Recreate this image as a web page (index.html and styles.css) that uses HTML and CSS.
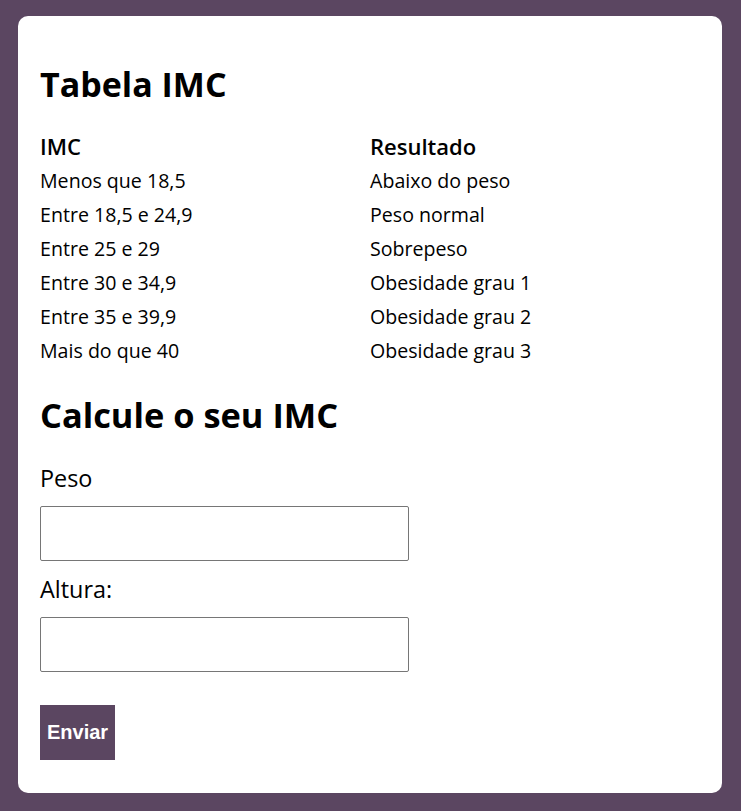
FILE: index.html
```html
<!DOCTYPE html>
<html lang="pt-BR">
<head>
<meta charset="utf-8">
<title>Tabela IMC</title>
<link rel="stylesheet" href="styles.css">
</head>
<body>
<main class="card">
  <h1 class="title">Tabela IMC</h1>
  <div class="table">
    <div class="th">IMC</div><div class="th">Resultado</div>
    <div class="td">Menos que 18,5</div><div class="td">Abaixo do peso</div>
    <div class="td">Entre 18,5 e 24,9</div><div class="td">Peso normal</div>
    <div class="td">Entre 25 e 29</div><div class="td">Sobrepeso</div>
    <div class="td">Entre 30 e 34,9</div><div class="td">Obesidade grau 1</div>
    <div class="td">Entre 35 e 39,9</div><div class="td">Obesidade grau 2</div>
    <div class="td">Mais do que 40</div><div class="td">Obesidade grau 3</div>
  </div>
  <h2 class="title sub">Calcule o seu IMC</h2>
  <form class="form">
    <label class="label" for="peso">Peso</label>
    <input class="input" id="peso" type="text">
    <label class="label" for="altura">Altura:</label>
    <input class="input" id="altura" type="text">
    <button class="btn" type="button">Enviar</button>
  </form>
</main>
</body>
</html>
```
FILE: styles.css
```css
html, body {
  margin: 0;
  padding: 0;
  background: #5b4661;
}
body {
  padding: 16px 19px 18px 18px;
  font-family: "Open Sans", sans-serif;
  color: #000;
}
.card {
  background: #fff;
  border-radius: 10px;
  padding: 22px 22px 33px;
}
.title {
  margin: 24px 0 24px;
  font-size: 34px;
  line-height: 44px;
  font-weight: 700;
}
.sub {
  margin: 26px 0 26px;
  font-size: 34.4px;
}
.table {
  display: grid;
  grid-template-columns: 330px 1fr;
  grid-auto-rows: 34px;
  align-items: center;
  margin-top: -1px;
}
.th {
  font-size: 22px;
  font-weight: 600;
}
.td {
  font-size: 19.6px;
}
.form {
  display: flex;
  flex-direction: column;
  align-items: flex-start;
}
.label {
  font-size: 23.4px;
  line-height: 30px;
  margin-bottom: 13px;
}
.input {
  box-sizing: border-box;
  width: 369px;
  height: 55px;
  border: 1px solid #767676;
  border-radius: 2px;
  margin: 0 0 13px;
  font-size: 18px;
}
.input + .btn {
  margin-top: 20px;
}
.btn {
  height: 55px;
  padding: 0 7px;
  border: none;
  background: #5b4661;
  color: #fff;
  font-family: "Liberation Sans", Arial, sans-serif;
  font-size: 20px;
  font-weight: 700;
}
```
